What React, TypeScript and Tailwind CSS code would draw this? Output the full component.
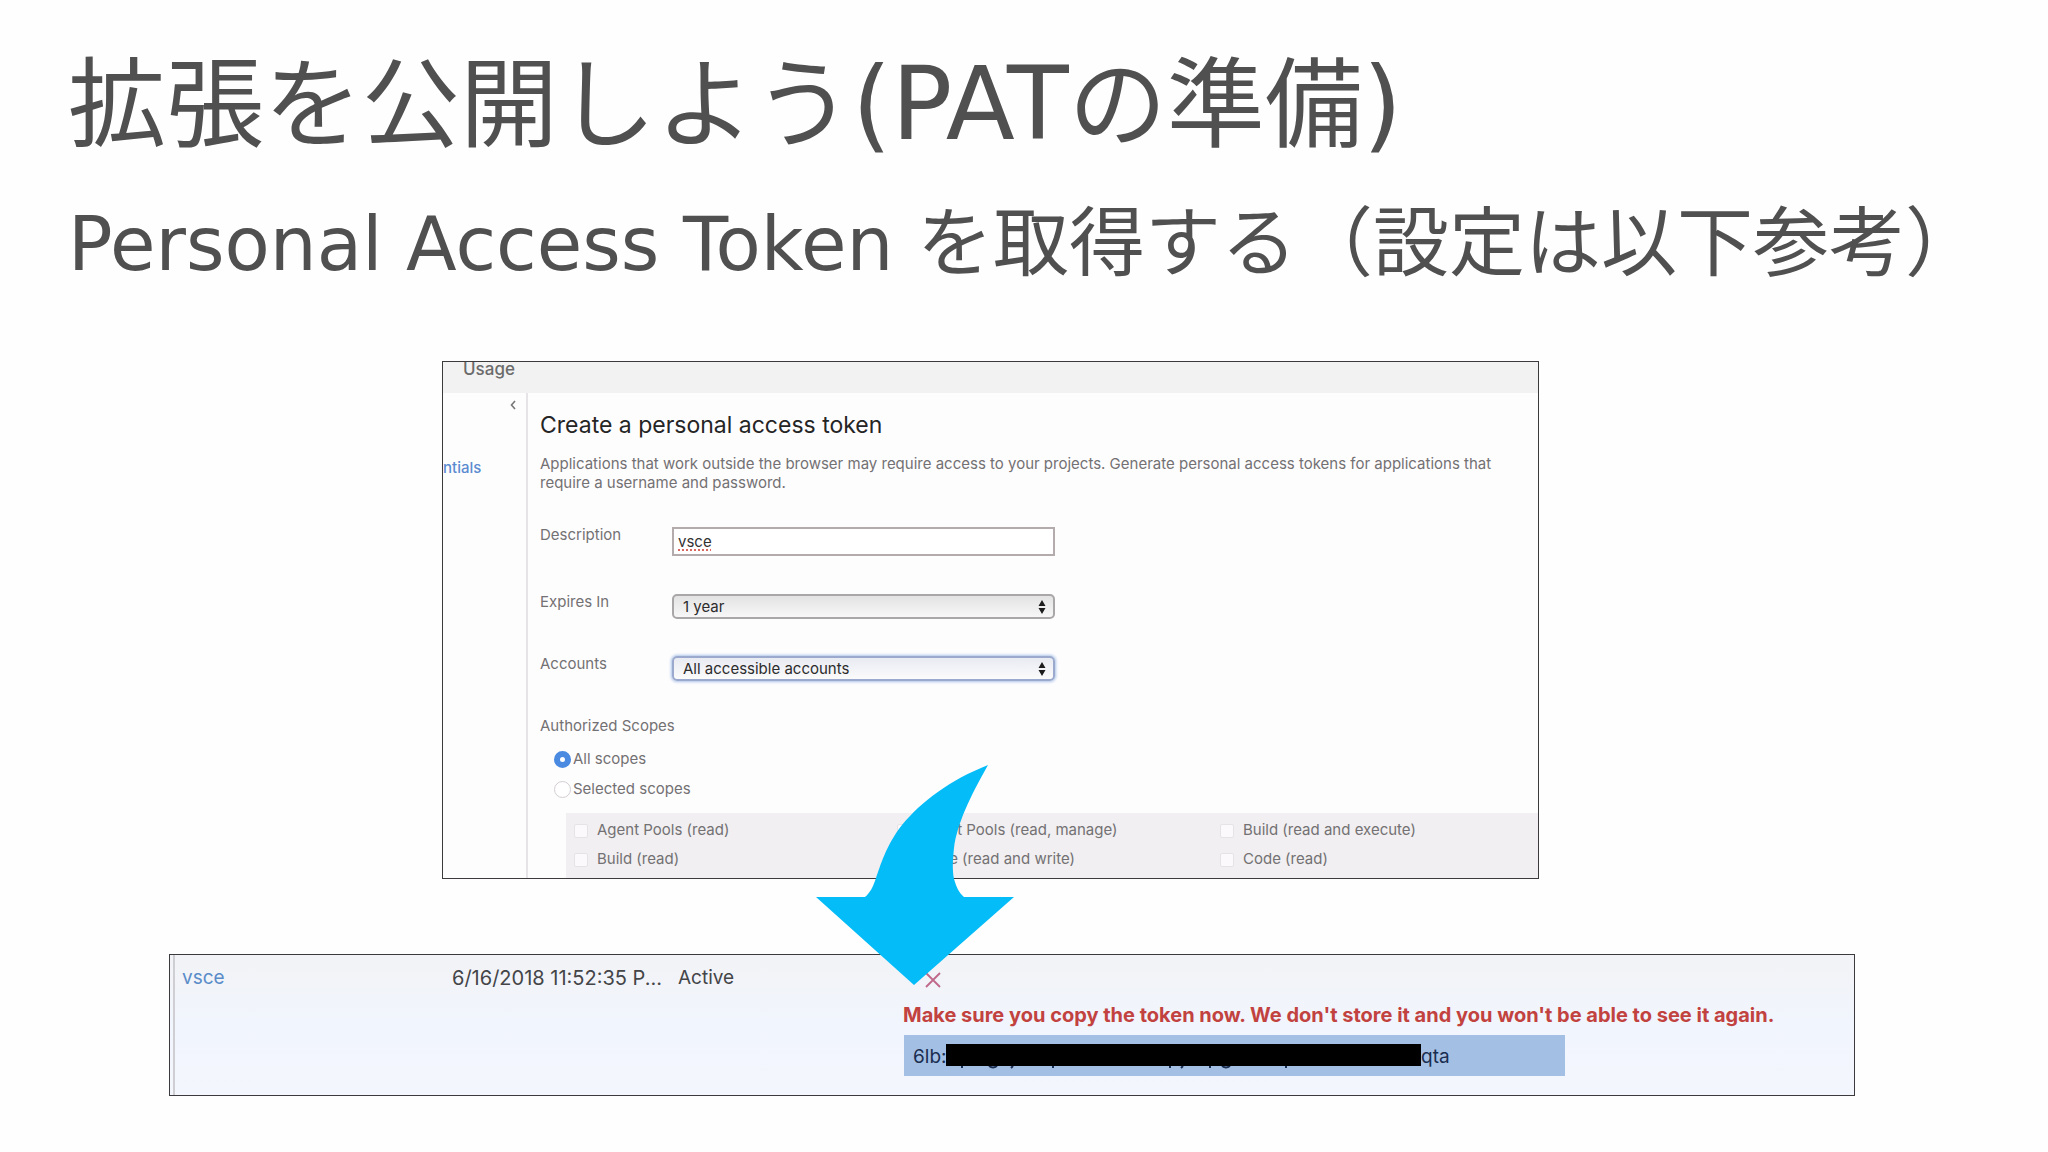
import type { ReactNode } from "react";

function SelectField({ id, label, value, focused }: { id: string; label: string; value: string; focused?: boolean }) {
  return (
    <div className="flex items-start">
      <label htmlFor={id} className="w-[132px] leading-[15px]">
        {label}
      </label>
      <div className="relative w-[383px]">
        <select
          id={id}
          defaultValue={value}
          className={
            focused
              ? "h-[25px] w-full appearance-none rounded-[5px] border-2 border-[#9aa9cd] bg-linear-to-b from-[#e9ebf3] to-[#fbfbfb] pl-[9px] text-[15px] leading-[20px] text-[#2c2c2c] shadow-[0_0_3px_1px_#a9c3e6] outline-none"
              : "h-[25px] w-full appearance-none rounded-[5px] border-2 border-[#a9a7a8] bg-linear-to-b from-[#e4e3e4] to-[#f8f7f8] pl-[9px] text-[15px] leading-[20px] text-[#2c2c2c] outline-none"
          }
        >
          <option>{value}</option>
        </select>
        <svg viewBox="0 0 8 14" className="pointer-events-none absolute top-[6px] right-[9px] h-[14px] w-[8px]" fill="#1c1c1c" aria-hidden="true">
          <path d="M4 0 7.5 6h-7zM4 14 .5 8h7z" />
        </svg>
      </div>
    </div>
  );
}

function Scope({ children }: { children: ReactNode }) {
  return (
    <label className="flex h-[29px] items-center gap-[9px]">
      <input type="checkbox" className="size-[14px] appearance-none rounded-[2px] border border-[#e6e3e6] bg-[#fbf9fb]" />
      {children}
    </label>
  );
}

function TokenForm() {
  return (
    <section className="mr-[316px] ml-[273px] overflow-hidden border border-[#3c3a3c] bg-[#fefdfe] text-[15px] text-[#737173]">
      <header className="h-[31px] bg-[#f2f2f2] pl-[20px] text-[17px] leading-[14px] font-medium text-[#6b6b6b]">
        Usage
      </header>
      <div className="flex">
        <nav className="flex w-[85px] flex-none flex-col border-r-2 border-[#e6e4e6]">
          <button type="button" aria-label="Collapse" className="mt-[7px] mr-[10px] self-end">
            <svg viewBox="0 0 6 10" className="h-[10px] w-[6px]" fill="none" stroke="#777" strokeWidth="1.6">
              <path d="M5 1 1.5 5 5 9" />
            </svg>
          </button>
          <a href="#credentials" className="mt-[48px] text-[15px] leading-[20px] font-medium text-[#5b8bd0]">
            ntials
          </a>
        </nav>
        <form className="min-w-0 flex-1">
          <div className="pl-[12px]">
            <h3 className="pt-4 text-[23px] leading-8 text-[#252525]">Create a personal access token</h3>
            <p className="mt-[13px] max-w-[980px] leading-[19px]">
              Applications that work outside the browser may require access to your projects. Generate personal access
              tokens for applications that require a username and password.
            </p>
            <div className="mt-[35px] flex items-start">
              <label htmlFor="description" className="w-[132px] leading-[15px]">
                Description
              </label>
              <input
                id="description"
                type="text"
                defaultValue="vsce"
                className="h-[29px] w-[383px] border-2 border-[#b3abac] bg-white px-[4px] text-[15px] text-[#333] underline decoration-[#d9665f] decoration-dotted decoration-2 underline-offset-2 outline-none"
              />
            </div>
            <div className="mt-[38px]">
              <SelectField id="expires" label="Expires In" value="1 year" />
            </div>
            <div className="mt-[37px]">
              <SelectField id="accounts" label="Accounts" value="All accessible accounts" focused />
            </div>
            <fieldset className="mt-[37px]">
              <legend className="leading-[15px]">Authorized Scopes</legend>
              <div className="mt-[11px] ml-[14px]">
                <label className="flex h-[30px] items-center gap-[2px]">
                  <input
                    type="radio"
                    name="scopes"
                    defaultChecked
                    className="size-[17px] appearance-none rounded-full border-[6px] border-[#4a8ae0] bg-white"
                  />
                  All scopes
                </label>
                <label className="flex h-[30px] items-center gap-[2px]">
                  <input
                    type="radio"
                    name="scopes"
                    className="size-[17px] appearance-none rounded-full border border-[#d3ced2] bg-white"
                  />
                  Selected scopes
                </label>
              </div>
            </fieldset>
          </div>
          <div className="mt-[9px] ml-[38px] grid grid-cols-[323px_323px_1fr] bg-[#f1eff1] px-[8px] pt-[3px] pb-[4px]">
            <Scope>Agent Pools (read)</Scope>
            <Scope>Agent Pools (read, manage)</Scope>
            <Scope>Build (read and execute)</Scope>
            <Scope>Build (read)</Scope>
            <Scope>Code (read and write)</Scope>
            <Scope>Code (read)</Scope>
          </div>
        </form>
      </div>
    </section>
  );
}

function TokenRow() {
  return (
    <section className="mt-[75px] flex h-[142px] border border-[#3c3a3c] bg-linear-to-b from-[#f2f3f6] via-[#f1f5fd] to-[#f4f6fd] text-[19px] leading-[22px] text-[#444548]">
      <div className="w-[5px] border-r-2 border-[#cfcfd3]" />
      <a href="#vsce" className="mt-[12px] ml-[7px] w-[270px] text-[#5a8cc8]">
        vsce
      </a>
      <div className="mt-[12px] w-[226px] text-[20px]">6/16/2018 11:52:35 P...</div>
      <div className="mt-[12px] w-[225px]">Active</div>
      <div className="flex flex-col items-start">
        <button type="button" aria-label="Revoke" className="mt-[17px] ml-[22px]">
          <svg viewBox="0 0 16 16" className="size-4" fill="none" stroke="#c0688a" strokeWidth="1.8">
            <path d="M1 1l14 14M15 1 1 15" />
          </svg>
        </button>
        <p className="mt-[16px] text-[20px] leading-[22px] font-bold text-[#c2423f]">
          Make sure you copy the token now. We don't store it and you won't be able to see it again.
        </p>
        <div className="mt-[9px] ml-[1px] flex h-[41px] w-[661px] items-center bg-[#a3c0e4] pl-[9px] text-[#1b2d50]">
          <span className="w-[33px] flex-none pt-[2px] whitespace-nowrap">6lb:</span>
          <span className="flex h-[28px] w-[475px] flex-none flex-col pt-[2px]">
            <span className="h-[22px] bg-black" />
            <svg viewBox="0 0 474 4" className="h-[4px] w-[474px]" fill="none" stroke="#1b2d50" strokeWidth="2" aria-hidden="true">
              <path d="M16 0v2M43 0q4 3 8 0M67 0l-2 2M107 0v2M224 0v2M237 0l-2 2M264 0v2M276 0q4 3 8 0M340 0v2" />
            </svg>
          </span>
          <span className="pt-[2px]">qta</span>
        </div>
      </div>
    </section>
  );
}

export default function App() {
  return (
    <main className="min-h-screen bg-[#fefefe] pb-14 font-['Inter','Noto_Sans_CJK_JP',sans-serif]">
      <div className="pt-[44px] pl-[68px] font-['DejaVu_Sans','Noto_Sans_CJK_JP',sans-serif] whitespace-nowrap text-[#505050]">
        <h1 className="h-[120px] text-[98px] leading-[120px]">
          拡張を公開しよう<span className="text-[101px]">(PAT</span>の準備<span className="text-[101px]">)</span>
        </h1>
        <h2 className="mt-[20px] h-[120px] text-[76px] leading-[120px]">
          <span className="text-[74px]">Personal Access Token </span>を取得する（設定は以下参考）
        </h2>
      </div>
      <div className="relative mt-[57px] mr-[193px] ml-[169px]">
        <TokenForm />
        <TokenRow />
        <svg viewBox="816 765 198 220" className="absolute top-[404px] left-[647px] h-[220px] w-[198px]" fill="#04bcf7" aria-hidden="true">
          <path d="M988 765C950 780 922 801 902 825C886 845 880 867 876 878C873 887 870 893 865 897H816L914 985L1014 897H964C959 893 956 886 954 879C952 869 953 858 954 848C957 824 970 797 988 765Z" />
        </svg>
      </div>
    </main>
  );
}
